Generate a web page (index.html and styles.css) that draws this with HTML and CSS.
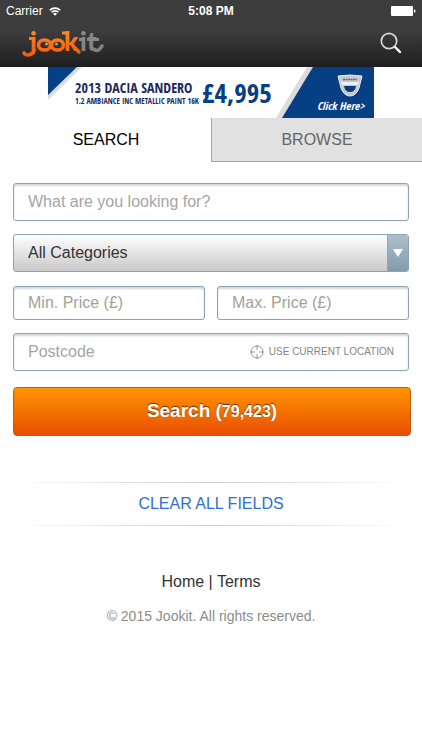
FILE: index.html
```html
<!DOCTYPE html>
<html lang="en">
<head>
<meta charset="utf-8">
<meta name="viewport" content="width=device-width, initial-scale=1">
<title>Jookit</title>
<link rel="stylesheet" href="styles.css">
</head>
<body>
<header class="header">
  <div class="status">
    <div class="carrier">
      <span>Carrier</span>
      <svg class="wifi" viewBox="0 0 12 9" aria-hidden="true">
        <path d="M.7 3.300a7.500 7.500 0 0 1 10.600 0M2.600 5.300a4.800 4.800 0 0 1 6.800 0" fill="none" stroke="#fff" stroke-width="1.600"/>
        <path d="M6 8.800 4 6.800a2.800 2.800 0 0 1 4 0z" fill="#fff"/>
      </svg>
    </div>
    <span class="time">5:08 PM</span>
    <svg class="battery" viewBox="0 0 25 10" aria-hidden="true">
      <rect width="22" height="10" rx="1" fill="#fff"/>
      <path d="M23 3.200q1.600.4 1.600 1.800T23 6.800z" fill="#fff"/>
    </svg>
  </div>
  <div class="bar">
    <a class="logo" href="#" aria-label="Jookit home">
      <svg viewBox="0 0 82 32">
        <defs>
          <linearGradient id="orange" x1="0" y1="4" x2="0" y2="30" gradientUnits="userSpaceOnUse">
            <stop offset="0" stop-color="#ff8a1e"/><stop offset="1" stop-color="#f8560a"/>
          </linearGradient>
          <linearGradient id="grey" x1="0" y1="4" x2="0" y2="26" gradientUnits="userSpaceOnUse">
            <stop offset="0" stop-color="#8c8c8c"/><stop offset="1" stop-color="#808080"/>
          </linearGradient>
        </defs>
        <text class="logo-text" x="8" y="24" fill="url(#orange)">j</text>
        <path d="M12 23q-1 5-6 5-3 0-4-2" fill="none" stroke="url(#orange)" stroke-width="3.600" stroke-linecap="round"/>
        <path d="M7 11.500h5" stroke="url(#orange)" stroke-width="3"/>
        <g fill="none" stroke="url(#orange)" stroke-width="3.600">
          <ellipse cx="22.500" cy="18" rx="6" ry="5"/>
          <ellipse cx="35.500" cy="18" rx="6" ry="5"/>
        </g>
        <circle cx="24.500" cy="17" r="1.600" fill="#ff8522"/>
        <circle cx="34.500" cy="17" r="1.600" fill="#ff8522"/>
        <text class="logo-text" x="42" y="24" fill="url(#orange)">k</text>
        <path d="M40 6h5" stroke="url(#orange)" stroke-width="3"/>
        <path d="m53 21 4 4" stroke="url(#orange)" stroke-width="3.400" stroke-linecap="round"/>
        <text class="logo-text" x="58" y="24" fill="url(#grey)">i</text>
        <text class="logo-text" x="65" y="24" fill="url(#grey)">t</text>
        <path d="M57 12.500h5M65 12.500h12" stroke="url(#grey)" stroke-width="3"/>
        <path d="M70 21q5 6 10-2" fill="none" stroke="url(#grey)" stroke-width="3.400" stroke-linecap="round"/>
      </svg>
    </a>
    <button class="find" type="button" aria-label="Search">
      <svg viewBox="0 0 22 22">
        <circle cx="9" cy="9" r="7.700" fill="none" stroke="#d8d8d8" stroke-width="1.700"/>
        <path d="m14.300 14.300 1.500 1.500" stroke="#d8d8d8" stroke-width="1.700"/>
        <path d="m15.500 15.500 4.500 4.500" stroke="#fff" stroke-width="2.400" stroke-linecap="round"/>
      </svg>
    </button>
  </div>
</header>
<main>
  <a class="ad" href="#" aria-label="Dacia Sandero offer">
    <svg viewBox="0 0 326 51">
      <path d="M0 0h34L0 33z" fill="#dcdcde"/>
      <path d="M0 0h29L0 28z" fill="#063f84"/>
      <path d="M259 0h9l-32 51h-8z" fill="#dcdcde"/>
      <path d="M265 0h61v51h-92z" fill="#063f84"/>
      <text class="ad-title" x="27" y="26">2013 DACIA SANDERO</text>
      <text class="ad-sub" x="27" y="37">1.2 AMBIANCE INC METALLIC PAINT 16K</text>
      <text class="ad-price" x="154" y="36">£4,995</text>
      <path d="M290 9q12-2 24 0l-3 12q-3 8-9 8t-9-8z" fill="#c6c9ce" stroke="#eee" stroke-width="1"/>
      <path d="M293 15h18l-1 3h-16z" fill="#eeeff1"/>
      <path d="M296 19h12q-1 6-6 6t-6-6z" fill="#0c3b76"/>
      <path d="M295 12.500h14" stroke="#646b7a" stroke-width="1.500" stroke-dasharray="2 .5"/>
      <text class="ad-click" x="269" y="43">Click Here&gt;</text>
    </svg>
  </a>
  <nav class="tabs">
    <a class="tab active" href="#">SEARCH</a>
    <a class="tab" href="#">BROWSE</a>
  </nav>
  <form class="form">
    <input class="field" type="text" aria-label="Keywords" placeholder="What are you looking for?">
    <div class="select">
      <select class="field" aria-label="Category"><option>All Categories</option></select>
      <span class="arrow"></span>
    </div>
    <div class="prices">
      <input class="field short" type="text" aria-label="Minimum price" placeholder="Min. Price (£)">
      <input class="field short" type="text" aria-label="Maximum price" placeholder="Max. Price (£)">
    </div>
    <div class="field postcode">
      <input type="text" aria-label="Postcode" placeholder="Postcode">
      <button class="locate" type="button">
        <svg viewBox="0 0 14 14" aria-hidden="true">
          <circle cx="7" cy="7" r="6" fill="none" stroke="#999"/>
          <path d="M7 0v5M7 9v5M0 7h5M9 7h5" stroke="#999"/>
        </svg>
        <span>USE CURRENT LOCATION</span>
      </button>
    </div>
    <button class="submit" type="submit">Search (<span class="count">79,423</span>)</button>
    <button class="clear" type="reset">CLEAR ALL FIELDS</button>
  </form>
</main>
<footer class="footer">
  <div class="links"><a href="#">Home</a> | <a href="#">Terms</a></div>
  <p class="copyright">© 2015 Jookit. All rights reserved.</p>
</footer>
</body>
</html>
```

FILE: styles.css
```css
* {
  box-sizing: border-box;
}

body {
  margin: 0;
  background: #fff;
  color: #333;
  font: 16px/20px "Liberation Sans", Arial, sans-serif;
}

a {
  color: inherit;
  text-decoration: none;
}

button,
input,
select {
  font: inherit;
}

svg {
  display: block;
}

.header {
  background: linear-gradient(#3d3d3d 45%, #1e1e1e);
  color: #fff;
}

.status {
  display: grid;
  grid-template-columns: 1fr auto 1fr;
  align-items: center;
  height: 22px;
  padding: 0 6px;
  font-size: 12px;
}

.carrier {
  display: flex;
  align-items: center;
  gap: 6px;
}

.wifi {
  width: 12px;
  height: 9px;
}

.time {
  font-weight: bold;
}

.battery {
  justify-self: end;
  width: 25px;
  height: 10px;
}

.bar {
  display: flex;
  justify-content: space-between;
  align-items: center;
  height: 45px;
  padding: 0 20px 3px 22px;
}

.logo svg {
  width: 82px;
  height: 32px;
  overflow: visible;
}

.logo-text {
  font: 900 26px Lato, sans-serif;
}

.find {
  padding: 0;
  border: 0;
  background: none;
}

.find svg {
  width: 22px;
  height: 22px;
}

.ad {
  display: block;
  width: 326px;
  margin: 0 auto;
}

.ad text {
  font-family: "Open Sans Condensed", "Liberation Sans Narrow", "Roboto Condensed", sans-serif;
  font-weight: bold;
}

.ad .ad-title {
  fill: #20285c;
  font-size: 14px;
}

.ad .ad-sub {
  fill: #20285c;
  font-size: 8px;
}

.ad .ad-price {
  fill: #063f84;
  font-size: 27px;
}

.ad .ad-click {
  fill: #fff;
  font-size: 11px;
  font-style: italic;
}

.tabs {
  display: grid;
  grid-template-columns: 1fr 1fr;
  height: 44px;
}

.tab {
  display: flex;
  justify-content: center;
  align-items: center;
  border: 1px solid #a5a5a5;
  border-width: 0 0 1px 1px;
  background: #e1e1e1;
  color: #666;
}

.tab.active {
  border-color: transparent;
  background: none;
  color: #000;
}

.form {
  display: flex;
  flex-direction: column;
  gap: 13px;
  padding: 21px 13px 0;
}

.field {
  width: 100%;
  height: 38px;
  padding: 0 14px;
  border: 1px solid #8ba3b5;
  border-radius: 3px;
  background: #fff;
  color: #333;
  box-shadow: inset 0 2px 2px #d4d7dc;
}

.field.short {
  height: 34px;
}

::placeholder {
  color: #a5a5a5;
  opacity: 1;
}

.short::placeholder {
  color: #a3a198;
}

.select {
  position: relative;
}

.select .field {
  display: block;
  appearance: none;
  background: linear-gradient(#fff, #c9c9c9);
  box-shadow: none;
}

.arrow {
  position: absolute;
  inset: 1px 1px 1px auto;
  display: grid;
  place-items: center;
  width: 21px;
  border-left: 1px solid #93a8b6;
  border-radius: 0 2px 2px 0;
  background: linear-gradient(#adbfcb, #829cac);
  pointer-events: none;
}

.arrow::before {
  content: "";
  border: 5px solid transparent;
  border-top: 8px solid #fff;
  border-bottom: 0;
}

.prices {
  display: grid;
  grid-template-columns: 1fr 1fr;
  gap: 12px;
  padding-top: 1px;
}

.postcode {
  display: flex;
  align-items: center;
}

.postcode input {
  flex: 1;
  min-width: 0;
  padding: 0;
  border: 0;
  background: none;
  outline: none;
}

.locate {
  display: flex;
  align-items: center;
  gap: 5px;
  padding: 0;
  border: 0;
  background: none;
  color: #858585;
  font-size: 10px;
}

.locate svg {
  width: 14px;
  height: 14px;
}

.submit {
  height: 49px;
  margin: 3px -2px 0 0;
  border: 1px solid #bd5b1b;
  border-radius: 4px;
  background: linear-gradient(#ff9500, #e84e00);
  color: #fff;
  font-size: 19px;
  font-weight: bold;
  text-shadow: 0 -1px 1px #6b3000;
}

.count {
  font-size: 16px;
}

.clear {
  height: 44px;
  margin-top: 33px;
  padding: 0;
  border: 0;
  background:
    linear-gradient(90deg, transparent, #ccc, transparent) top / 100% 1px no-repeat,
    linear-gradient(90deg, transparent, #ccc, transparent) bottom / 100% 1px no-repeat;
  color: #2f6fd0;
}

.footer {
  padding-top: 46px;
  text-align: center;
}

.copyright {
  margin: 14px 0 0;
  color: #8c8c8c;
  font-size: 14px;
}
```
